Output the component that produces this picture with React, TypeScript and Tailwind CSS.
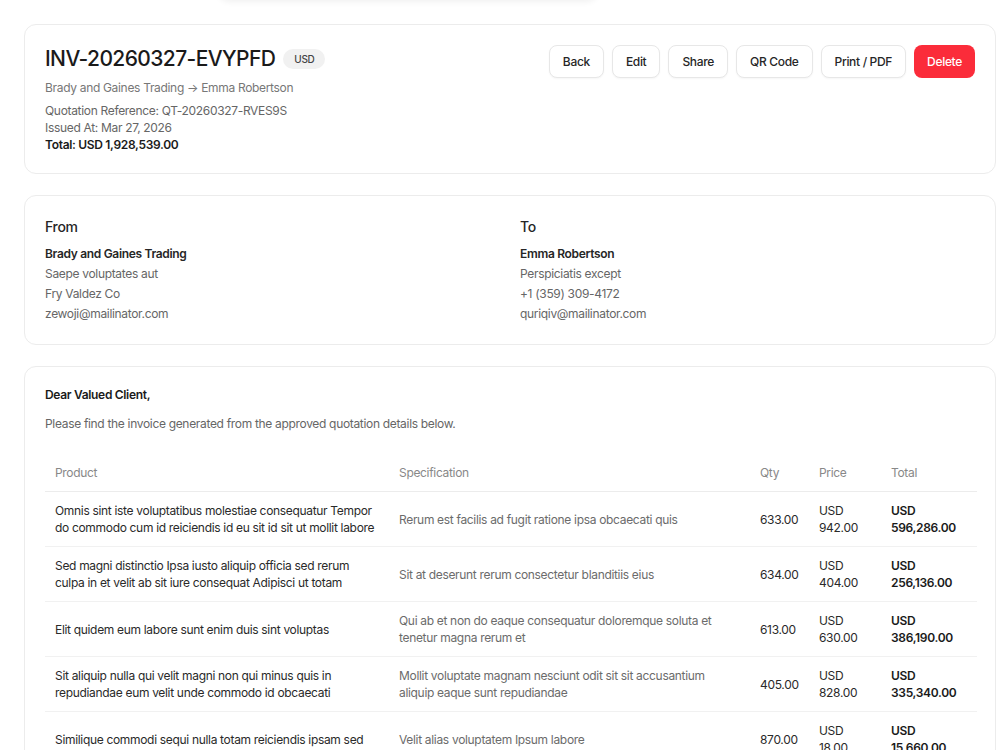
import React from "react";

const rows = [
  {
    product: "Omnis sint iste voluptatibus molestiae consequatur Tempor do commodo cum id reiciendis id eu sit id sit ut mollit labore",
    spec: "Rerum est facilis ad fugit ratione ipsa obcaecati quis",
    qty: "633.00",
    price: "942.00",
    total: "596,286.00",
  },
  {
    product: "Sed magni distinctio Ipsa iusto aliquip officia sed rerum culpa in et velit ab sit iure consequat Adipisci ut totam",
    spec: "Sit at deserunt rerum consectetur blanditiis eius",
    qty: "634.00",
    price: "404.00",
    total: "256,136.00",
  },
  {
    product: "Elit quidem eum labore sunt enim duis sint voluptas",
    spec: "Qui ab et non do eaque consequatur doloremque soluta et tenetur magna rerum et",
    qty: "613.00",
    price: "630.00",
    total: "386,190.00",
  },
  {
    product: "Sit aliquip nulla qui velit magni non qui minus quis in repudiandae eum velit unde commodo id obcaecati",
    spec: "Mollit voluptate magnam nesciunt odit sit sit accusantium aliquip eaque sunt repudiandae",
    qty: "405.00",
    price: "828.00",
    total: "335,340.00",
  },
  {
    product: "Similique commodi sequi nulla totam reiciendis ipsam sed",
    spec: "Velit alias voluptatem Ipsum labore",
    qty: "870.00",
    price: "18.00",
    total: "15,660.00",
  },
];

function Btn({ children }: { children: React.ReactNode }) {
  return (
    <button className="h-[33px] px-[13px] rounded-lg border border-[#e7e7e7] bg-white text-[12px] font-medium text-[#262626] shadow-[0_1px_2px_rgba(0,0,0,0.04)]">
      {children}
    </button>
  );
}

export default function App() {
  return (
    <div
      className="relative min-h-[750px] bg-white text-[#1f1f1f] tracking-[-0.02em]"
      style={{ fontFamily: "Inter, 'Noto Sans', sans-serif" }}
    >
      <div className="absolute left-[218px] top-[-20px] h-[20px] w-[380px] rounded-b-xl bg-white shadow-[0_2px_6px_rgba(0,0,0,0.06)]" />
      <div className="ml-6 w-[972px] pt-6 flex flex-col gap-[21px]">
        {/* Header card */}
        <div className="rounded-xl border border-[#ececec] bg-white p-5 flex justify-between">
          <div className="flex flex-col">
            <div className="flex items-center gap-2 h-[28px]">
              <h1 className="text-[21px] font-medium leading-[28px] tracking-[-0.6px] text-[#1a1a1a]">
                INV-20260327-EVYPFD
              </h1>
              <span className="rounded-full bg-[#f1f1f1] px-[11px] py-[3px] text-[10px] font-medium leading-[14px] text-[#444]">
                USD
              </span>
            </div>
            <div className="mt-[6px] text-[12px] leading-[17px] text-[#777]">
              Brady and Gaines Trading → Emma Robertson
            </div>
            <div className="mt-[6px] text-[12px] leading-[17px] text-[#666]">
              <div>Quotation Reference: QT-20260327-RVES9S</div>
              <div>Issued At: Mar 27, 2026</div>
              <div className="font-semibold text-[#1a1a1a]">Total: USD 1,928,539.00</div>
            </div>
          </div>
          <div className="flex items-start gap-2">
            <Btn>Back</Btn>
            <Btn>Edit</Btn>
            <Btn>Share</Btn>
            <Btn>QR Code</Btn>
            <Btn>Print / PDF</Btn>
            <button className="h-[33px] px-[13px] rounded-lg bg-[#fb2c3a] text-[12px] font-medium text-white">
              Delete
            </button>
          </div>
        </div>

        {/* From / To card */}
        <div className="rounded-xl border border-[#ececec] bg-white p-5 grid grid-cols-2 gap-5">
          <div>
            <div className="text-[14px] font-medium leading-[22px] text-[#262626]">From</div>
            <div className="mt-[6px] text-[12px] leading-[20px] text-[#666]">
              <div className="font-semibold text-[#262626]">Brady and Gaines Trading</div>
              <div>Saepe voluptates aut</div>
              <div>Fry Valdez Co</div>
              <div>zewoji@mailinator.com</div>
            </div>
          </div>
          <div>
            <div className="text-[14px] font-medium leading-[22px] text-[#262626]">To</div>
            <div className="mt-[6px] text-[12px] leading-[20px] text-[#666]">
              <div className="font-semibold text-[#262626]">Emma Robertson</div>
              <div>Perspiciatis except</div>
              <div>+1 (359) 309-4172</div>
              <div>quriqiv@mailinator.com</div>
            </div>
          </div>
        </div>

        {/* Items card */}
        <div className="rounded-xl border border-[#ececec] bg-white px-5 pt-[19px] pb-5">
          <div className="text-[12px] font-semibold leading-[17px] text-[#1a1a1a]">Dear Valued Client,</div>
          <div className="mt-[12px] text-[12px] leading-[17px] text-[#666]">
            Please find the invoice generated from the approved quotation details below.
          </div>
          <table className="mt-[22px] w-[932px] table-fixed border-collapse text-[12px] leading-[17px]">
            <colgroup>
              <col className="w-[344px]" />
              <col className="w-[361px]" />
              <col className="w-[59px]" />
              <col className="w-[72px]" />
              <col className="w-[96px]" />
            </colgroup>
            <thead>
              <tr className="border-b border-[#ececec] text-left text-[#888]">
                <th className="px-2.5 py-2.5 font-normal">Product</th>
                <th className="px-2.5 py-2.5 font-normal">Specification</th>
                <th className="px-2.5 py-2.5 font-normal">Qty</th>
                <th className="px-2.5 py-2.5 font-normal">Price</th>
                <th className="px-2.5 py-2.5 font-normal">Total</th>
              </tr>
            </thead>
            <tbody>
              {rows.map((r, i) => (
                <tr key={i} className="border-b border-[#f1f1f1] align-middle">
                  <td className="pl-2.5 pr-[14px] py-2.5 text-[#2a2a2a]">{r.product}</td>
                  <td className="pl-2.5 pr-[14px] py-2.5 text-[#6b6b6b]">{r.spec}</td>
                  <td className="px-2.5 py-2.5 text-[#2a2a2a]">{r.qty}</td>
                  <td className="px-2.5 py-2.5 text-[#2a2a2a]">
                    <div>USD</div>
                    <div>{r.price}</div>
                  </td>
                  <td className="px-2.5 py-2.5 font-semibold text-[#1a1a1a]">
                    <div>USD</div>
                    <div>{r.total}</div>
                  </td>
                </tr>
              ))}
            </tbody>
          </table>
        </div>
      </div>
    </div>
  );
}
